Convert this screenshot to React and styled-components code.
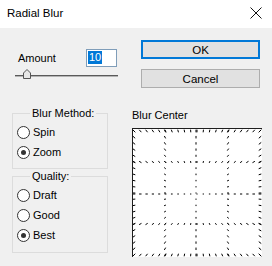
import React from "react";
import styled, { createGlobalStyle } from "styled-components";

const GlobalStyle = createGlobalStyle`
  html, body {
    margin: 0;
    padding: 0;
  }
  body {
    width: 272px;
    height: 266px;
    overflow: hidden;
    background: #f0f0f0;
    font-family: "Liberation Sans", Arial, sans-serif;
    font-size: 11px;
    color: #000;
  }
`;

const Dialog = styled.div`
  width: 272px;
  height: 266px;
  background: #f0f0f0;
  display: flex;
  flex-direction: column;
`;

const TitleBar = styled.div`
  height: 28px;
  box-sizing: border-box;
  background: #fff;
  display: flex;
  align-items: center;
  justify-content: space-between;
  padding: 0 10px 2px 7px;
`;

const Title = styled.span`
  font-size: 11.5px;
`;

const Body = styled.div`
  display: flex;
  padding-left: 12px;
`;

const LeftCol = styled.div`
  width: 106px;
  display: flex;
  flex-direction: column;
`;

const RightCol = styled.div`
  width: 130px;
  margin-left: 14px;
  display: flex;
  flex-direction: column;
  padding-top: 12px;
`;

const AmountRow = styled.div`
  margin-top: 21px;
  display: flex;
  align-items: center;
  justify-content: space-between;
  padding: 0 1px 0 6px;
`;

const TextField = styled.div`
  width: 31px;
  height: 18px;
  box-sizing: border-box;
  border: 1px solid #7f9db9;
  background: #fff;
  padding: 1px 0 0 1px;
`;

const Selected = styled.span`
  display: inline-block;
  background: #0078d7;
  color: #fff;
  line-height: 13px;
  padding: 0 1px;
`;

const SliderBox = styled.div`
  margin: 1px 0 0 3px;
  width: 103px;
  height: 12px;
`;

const Group = styled.fieldset`
  margin: ${(p) => p.$top}px 0 0 0;
  padding: 2px 0 ${(p) => p.$bottom}px 4px;
  width: 96px;
  box-sizing: border-box;
  border: 1px solid #dcdcdc;
  display: flex;
  flex-direction: column;
`;

const Legend = styled.legend`
  margin-left: 13px;
  padding: 0 2px;
  line-height: 14px;
`;

const RadioRow = styled.div`
  height: 20px;
  display: flex;
  align-items: center;
  gap: 3px;
`;

const RadioCircle = styled.span`
  width: 13px;
  height: 13px;
  box-sizing: border-box;
  border-radius: 50%;
  border: 1px solid #333;
  background: #fff;
  display: flex;
  align-items: center;
  justify-content: center;

  &::after {
    content: "";
    width: 5px;
    height: 5px;
    border-radius: 50%;
    background: ${(p) => (p.$checked ? "#333" : "transparent")};
  }
`;

const Button = styled.div`
  width: 119px;
  height: 19px;
  margin-left: 9px;
  box-sizing: border-box;
  background: #e1e1e1;
  border: ${(p) => (p.$default ? "2px solid #0078d7" : "1px solid #adadad")};
  display: flex;
  align-items: center;
  justify-content: center;
  font-size: 11.5px;
  & + & {
    margin-top: 10px;
  }
`;

const CenterLabel = styled.div`
  margin-top: 20px;
  line-height: 14px;
`;

const Preview = styled.div`
  margin-top: 6px;
  width: 130px;
  height: 129px;
  box-sizing: border-box;
  background: #fff;
  border-top: 1px solid #1e1e1e;
  border-left: 1px solid #1e1e1e;
  display: flex;
`;

function Radio({ label, checked }) {
  return (
    <RadioRow>
      <RadioCircle $checked={checked} />
      <span>{label}</span>
    </RadioRow>
  );
}

function CloseIcon() {
  return (
    <svg width="12" height="12" viewBox="0 0 12 12">
      <path d="M0.5 0.5 L11.5 11.5 M11.5 0.5 L0.5 11.5" stroke="#111" strokeWidth="1" />
    </svg>
  );
}

function Slider() {
  return (
    <SliderBox>
      <svg width="103" height="12" viewBox="0 0 103 12">
        <rect x="0" y="7" width="103" height="1" fill="#5a5a5a" />
        <rect x="0" y="8" width="103" height="1" fill="#b4b4b4" />
        <polygon
          points="12,1.5 15.5,5 15.5,10.5 8.5,10.5 8.5,5"
          fill="#e8e8e8"
          stroke="#555"
          strokeWidth="1"
        />
      </svg>
    </SliderBox>
  );
}

const LINES_X = [1, 32, 63, 95, 127];
const LINES_Y = [2, 33, 65, 95, 126];
const CX = 63;
const CY = 65;

function dashes() {
  const pts = [];
  const steps = 20;
  LINES_X.forEach((x) => {
    for (let i = 0; i <= steps; i++) pts.push([x, 2 + (124 * i) / steps]);
  });
  LINES_Y.forEach((y) => {
    for (let i = 0; i <= steps; i++) pts.push([1 + (126 * i) / steps, y]);
  });
  return pts.map(([x, y], i) => {
    const dx = CX - x;
    const dy = CY - y;
    const r = Math.hypot(dx, dy) || 1;
    const len = 1.1 + r * 0.025;
    const ux = dx / r;
    const uy = dy / r;
    return (
      <line
        key={i}
        x1={x - (ux * len) / 2}
        y1={y - (uy * len) / 2}
        x2={x + (ux * len) / 2}
        y2={y + (uy * len) / 2}
        stroke="#000"
        strokeWidth="1"
      />
    );
  });
}

function BlurCenter() {
  return (
    <Preview>
      <svg width="129" height="128" viewBox="0 0 129 128">
        {dashes()}
      </svg>
    </Preview>
  );
}

export default function App() {
  return (
    <Dialog>
      <GlobalStyle />
      <TitleBar>
        <Title>Radial Blur</Title>
        <CloseIcon />
      </TitleBar>
      <Body>
        <LeftCol>
          <AmountRow>
            <span>Amount</span>
            <TextField>
              <Selected>10</Selected>
            </TextField>
          </AmountRow>
          <Slider />
          <Group $top={26} $bottom={6}>
            <Legend>Blur Method:</Legend>
            <Radio label="Spin" />
            <Radio label="Zoom" checked />
          </Group>
          <Group $top={0} $bottom={7}>
            <Legend>Quality:</Legend>
            <Radio label="Draft" />
            <Radio label="Good" />
            <Radio label="Best" checked />
          </Group>
        </LeftCol>
        <RightCol>
          <Button $default>OK</Button>
          <Button>Cancel</Button>
          <CenterLabel>Blur Center</CenterLabel>
          <BlurCenter />
        </RightCol>
      </Body>
    </Dialog>
  );
}
